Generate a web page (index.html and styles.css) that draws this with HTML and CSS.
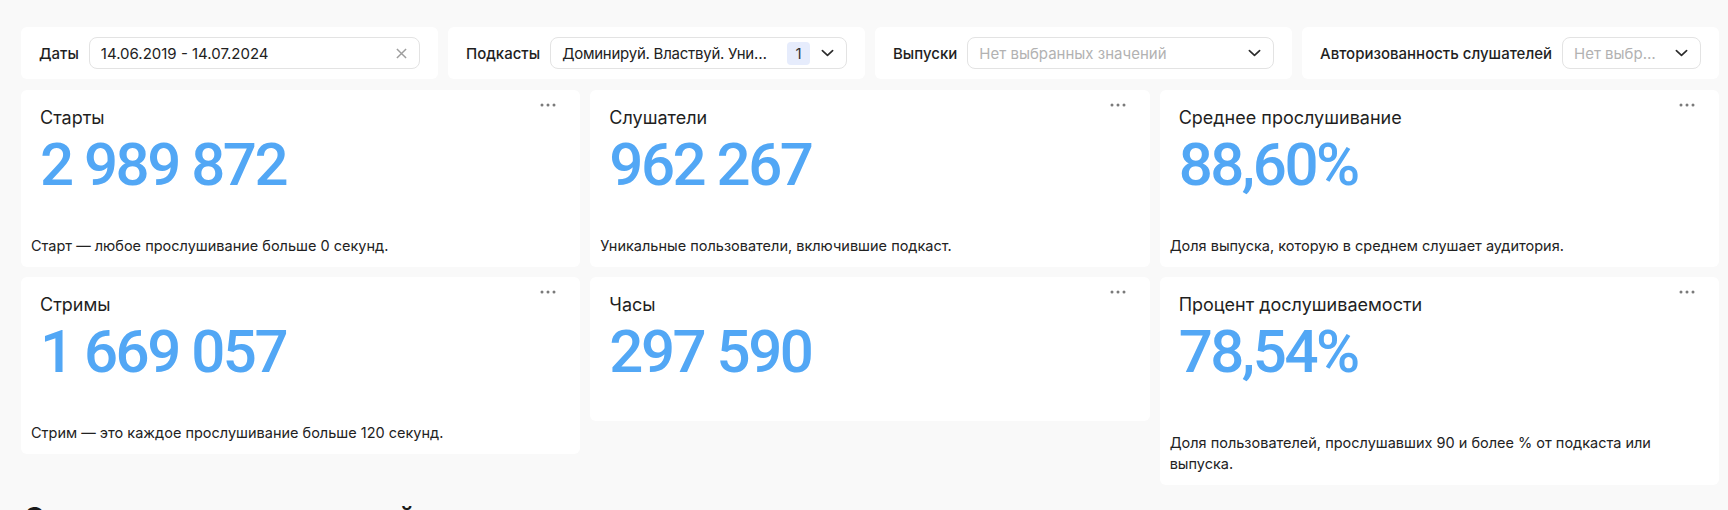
FILE: index.html
```html
<!DOCTYPE html>
<html lang="ru">
<head>
<meta charset="utf-8">
<title>Статистика подкаста</title>
<link rel="stylesheet" href="styles.css">
</head>
<body>
<div class="page">
  <div class="filters">
    <div class="filter">
      <span class="filter__label">Даты</span>
      <div class="control">
        <span class="control__text">14.06.2019 - 14.07.2024</span>
        <svg class="icon-clear" viewBox="0 0 12 12" width="12" height="12"><path d="M1 1L11 11M11 1L1 11" /></svg>
      </div>
    </div>
    <div class="filter">
      <span class="filter__label">Подкасты</span>
      <div class="control">
        <span class="control__text control__text--tight">Доминируй. Властвуй. Унижай.</span>
        <span class="control__badge">1</span>
        <svg class="icon-chevron" viewBox="0 0 14 8" width="14" height="8"><path d="M1.5 1.5L7 6.5L12.5 1.5" /></svg>
      </div>
    </div>
    <div class="filter">
      <span class="filter__label">Выпуски</span>
      <div class="control">
        <span class="control__text control__text--placeholder">Нет выбранных значений</span>
        <svg class="icon-chevron" viewBox="0 0 14 8" width="14" height="8"><path d="M1.5 1.5L7 6.5L12.5 1.5" /></svg>
      </div>
    </div>
    <div class="filter">
      <span class="filter__label">Авторизованность слушателей</span>
      <div class="control">
        <span class="control__text control__text--placeholder">Нет выбранных значений</span>
        <svg class="icon-chevron" viewBox="0 0 14 8" width="14" height="8"><path d="M1.5 1.5L7 6.5L12.5 1.5" /></svg>
      </div>
    </div>
  </div>

  <div class="metrics">
    <div class="metric">
      <div class="metric__title">Старты</div>
      <div class="metric__value">2 989 872</div>
      <div class="metric__desc">Старт — любое прослушивание больше 0 секунд.</div>
      <svg class="metric__menu" viewBox="0 0 16 4" width="16" height="4"><circle cx="2" cy="2" r="1.5"/><circle cx="8" cy="2" r="1.5"/><circle cx="14" cy="2" r="1.5"/></svg>
    </div>
    <div class="metric">
      <div class="metric__title">Слушатели</div>
      <div class="metric__value">962 267</div>
      <div class="metric__desc">Уникальные пользователи, включившие подкаст.</div>
      <svg class="metric__menu" viewBox="0 0 16 4" width="16" height="4"><circle cx="2" cy="2" r="1.5"/><circle cx="8" cy="2" r="1.5"/><circle cx="14" cy="2" r="1.5"/></svg>
    </div>
    <div class="metric">
      <div class="metric__title">Среднее прослушивание</div>
      <div class="metric__value">88,60%</div>
      <div class="metric__desc">Доля выпуска, которую в среднем слушает аудитория.</div>
      <svg class="metric__menu" viewBox="0 0 16 4" width="16" height="4"><circle cx="2" cy="2" r="1.5"/><circle cx="8" cy="2" r="1.5"/><circle cx="14" cy="2" r="1.5"/></svg>
    </div>
    <div class="metric">
      <div class="metric__title">Стримы</div>
      <div class="metric__value">1 669 057</div>
      <div class="metric__desc">Стрим — это каждое прослушивание больше 120 секунд.</div>
      <svg class="metric__menu" viewBox="0 0 16 4" width="16" height="4"><circle cx="2" cy="2" r="1.5"/><circle cx="8" cy="2" r="1.5"/><circle cx="14" cy="2" r="1.5"/></svg>
    </div>
    <div class="metric">
      <div class="metric__title">Часы</div>
      <div class="metric__value">297 590</div>
      <svg class="metric__menu" viewBox="0 0 16 4" width="16" height="4"><circle cx="2" cy="2" r="1.5"/><circle cx="8" cy="2" r="1.5"/><circle cx="14" cy="2" r="1.5"/></svg>
    </div>
    <div class="metric">
      <div class="metric__title">Процент дослушиваемости</div>
      <div class="metric__value">78,54%</div>
      <div class="metric__desc metric__desc--multiline">Доля пользователей, прослушавших 90 и более % от подкаста или выпуска.</div>
      <svg class="metric__menu" viewBox="0 0 16 4" width="16" height="4"><circle cx="2" cy="2" r="1.5"/><circle cx="8" cy="2" r="1.5"/><circle cx="14" cy="2" r="1.5"/></svg>
    </div>
  </div>

  <h2 class="section-title">Статистика прослушиваний</h2>
</div>
</body>
</html>
```
FILE: styles.css
```css
* {
  box-sizing: border-box;
}

html,
body {
  margin: 0;
  background: #f9f9f9;
}

body {
  font-family: Inter, "Noto Sans", Roboto, sans-serif;
  color: #222;
  overflow: hidden;
}

.page {
  padding: 27px 9px 0 21px;
}

/* Filters */
.filters {
  display: grid;
  grid-template-columns: repeat(4, minmax(0, 1fr));
  gap: 10px;
}

.filter {
  min-width: 0;
  display: flex;
  align-items: center;
  gap: 10px;
  height: 52px;
  padding: 10px 18px;
  background: #fff;
  border-radius: 6px;
}

.filter__label {
  flex: none;
  font-size: 15px;
  font-weight: 500;
  white-space: nowrap;
  color: #1f1f1f;
}

.control {
  flex: 1;
  min-width: 0;
  height: 32px;
  display: flex;
  align-items: center;
  gap: 11px;
  padding: 0 12px 0 11px;
  border: 1px solid #e3e3e3;
  border-radius: 8px;
  background: #fff;
}

.control__text {
  flex: 1;
  min-width: 0;
  font-size: 15px;
  white-space: nowrap;
  overflow: hidden;
  text-overflow: ellipsis;
  color: #222;
}

.control__text--tight {
  letter-spacing: -0.25px;
}

.control__text--placeholder {
  color: #b2b2b2;
}

.control__badge {
  flex: none;
  width: 23px;
  height: 23px;
  display: flex;
  align-items: center;
  justify-content: center;
  border-radius: 4px;
  background: #e6ecfc;
  font-size: 15px;
  color: #333;
}

.icon-clear {
  flex: none;
  width: 11px;
  height: 11px;
  fill: none;
  stroke: #9e9e9e;
  stroke-width: 1.6;
}

.icon-chevron {
  flex: none;
  width: 13px;
  height: 8px;
  fill: none;
  stroke: #2b2b2b;
  stroke-width: 1.8;
  stroke-linecap: round;
  stroke-linejoin: round;
}

/* Metrics */
.metrics {
  display: grid;
  grid-template-columns: repeat(3, minmax(0, 1fr));
  gap: 10px;
  align-items: start;
  margin-top: 11px;
}

.metric {
  position: relative;
  display: flex;
  flex-direction: column;
  padding: 16px 10px 11px;
  background: #fff;
  border-radius: 6px;
}

.metric__title {
  padding: 0 9px;
  font-size: 18px;
  line-height: 24px;
  color: #1f1f1f;
}

.metric__value {
  padding: 0 9px;
  margin-bottom: 23px;
  font-family: Roboto, "Noto Sans", sans-serif;
  font-size: 60px;
  font-weight: 500;
  line-height: 70px;
  letter-spacing: -2.5px;
  color: #52a7f5;
}

.metric__desc {
  margin-top: 12px;
  font-size: 14.5px;
  line-height: 21px;
  color: #222;
}

.metric__desc--multiline {
  margin-top: 22px;
  padding-right: 40px;
}

.metric__menu {
  position: absolute;
  top: 13px;
  right: 24px;
  width: 16px;
  height: 4px;
  fill: #7a7a7a;
}

/* Section heading */
.section-title {
  margin: 15px 0 0 3px;
  font-size: 27.5px;
  line-height: 34px;
  font-weight: 700;
  color: #1a1a1a;
}
```
